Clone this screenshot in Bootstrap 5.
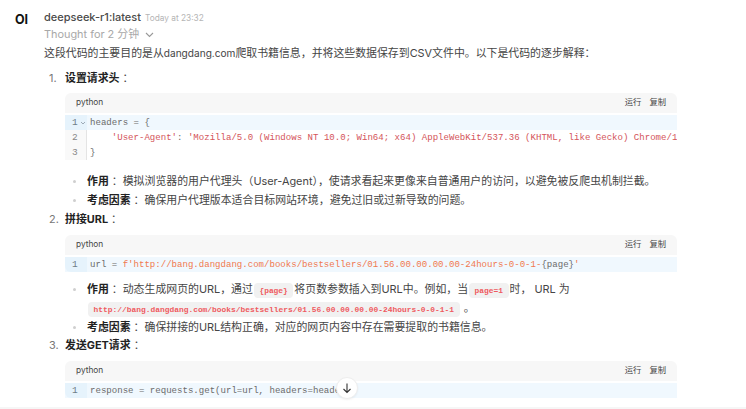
<!doctype html>
<html lang="zh"><head><meta charset="utf-8"><title>chat</title>
<link href="https://cdn.jsdelivr.net/npm/bootstrap@5.3.0/dist/css/bootstrap.min.css" rel="stylesheet">
<style>
html,body{height:409px;overflow:hidden;background:#fff}
body{font-family:Inter,"Noto Sans CJK SC",sans-serif;font-size:10.9px;line-height:19px;color:#454545;position:relative}
.msg-wrap{padding:9px 0 0 15px;gap:8px}
.logo-ol{font-weight:700;font-size:12.5px;color:#111;width:21px;line-height:20px;padding-top:1px;letter-spacing:-.2px}
.body-col{width:633px}
.who{font-weight:500;font-size:11px;color:#4a4a4a;line-height:17px;height:17px}
.when{font-size:8.3px;color:#b5b5b5;font-weight:400;margin-left:4px}
.thought{color:#a8a8a8;line-height:17px;height:18px;font-size:10.9px}
.thought svg{margin-left:6px}
.intro{line-height:19px;margin:0 0 6px}
.narrow-lat{font-size:10.1px}
.steps{list-style:none;margin:0;padding:0}
.step-row{line-height:19px;padding-left:21px;position:relative}
.num{position:absolute;left:5px;top:0;color:#777}
.step-row strong,.subs strong{font-weight:700;color:#222}
.cl{padding-left:3px}
.cblock{margin:5px 0 0 21px;width:612px;overflow:hidden}
.cblock.lower{margin-top:6px}
.chead{height:20px;background:#f7f7f7;border-radius:6px 6px 0 0;padding:0 11px;font-size:8.3px;color:#444;line-height:19px;margin-bottom:2px}
.chead .acts{gap:8px}
.crow{height:15px;line-height:15px;font-family:"Liberation Mono","Noto Sans CJK SC",monospace;font-size:9.07px;color:#6b6b6b;white-space:nowrap;overflow:hidden}
.crow.on{background:#f0f8fe}
.gut{flex:0 0 22px;background:#f9f9f9;border-right:1px solid #e4e4e4;color:#888;padding-left:7px;position:relative;font-size:9.5px}
.crow.on .gut{background:#e6f3fc;border-right-color:#e6f3fc;color:#6f7c88}
.fold{position:absolute;left:15px;top:5px}
.ctext{padding-left:3px;white-space:pre}
.rd{color:#d4545a}.org{color:#f0794f}
.last{border-radius:0 0 0 6px}
.subs{list-style:none;margin:12px 0 0 0;padding:0 0 0 43px}
.subs li{position:relative;line-height:19px}
.subs li::before{content:"";position:absolute;left:-14px;top:8px;width:3px;height:3px;border-radius:50%;background:#cfcfcf}
.subs.tight{margin-top:8px}
.subs.tight li:last-child{line-height:18px}
.icode{font-family:"Liberation Mono",monospace;font-weight:700;font-size:7.92px;line-height:1;color:#ef5a5f;background:#f1f1f1;border-radius:4px;padding:3px 5.5px;margin:0 1px}
.downbtn{position:absolute;left:336px;top:377px;width:22px;height:22px;border-radius:50%;background:#fff;border:1px solid #eee;box-shadow:0 1px 2px rgba(0,0,0,.05)}
.bottom-rule{position:absolute;left:0;right:0;top:407px;height:2px;background:#f6f6f6}
</style></head><body>
<div class="d-flex msg-wrap">
 <div class="logo-ol">OI</div>
 <div class="body-col">
  <div class="who">deepseek-r1:latest<span class="when">Today at 23:32</span></div>
  <div class="thought">Thought for 2 分钟<svg width="9" height="6" viewBox="0 0 9 6"><path d="M1 1l3.500 3.500L8 1" fill="none" stroke="#999" stroke-width="1.1"/></svg></div>
  <p class="intro">这段代码的主要目的是从<span class="narrow-lat">dangdang.com</span>爬取书籍信息，并将这些数据保存到CSV文件中。以下是代码的逐步解释：</p>
  <ol class="steps">
   <li>
    <div class="step-row"><span class="num">1.</span><strong>设置请求头</strong><span class="cl">：</span></div>
    <div class="cblock">
     <div class="chead d-flex justify-content-between"><span>python</span><span class="d-flex acts"><span>运行</span><span>复制</span></span></div>
     <div class="crow on d-flex"><div class="gut">1<svg class="fold" width="6" height="6" viewBox="0 0 6 6"><path d="M1 2l2 2 2-2" fill="none" stroke="#8a97a3" stroke-width=".8"/></svg></div><div class="ctext">headers = {</div></div>
     <div class="crow d-flex"><div class="gut">2</div><div class="ctext">    <span class="rd">'User-Agent'</span>: <span class="rd">'Mozilla/5.0 (Windows NT 10.0; Win64; x64) AppleWebKit/537.36 (KHTML, like Gecko) Chrome/120.0'</span></div></div>
     <div class="crow d-flex"><div class="gut">3</div><div class="ctext">}</div></div>
    </div>
    <ul class="subs">
     <li><strong>作用</strong><span class="cl">：</span>模拟浏览器的用户代理头（User-Agent），使请求看起来更像来自普通用户的访问，以避免被反爬虫机制拦截。</li>
     <li><strong>考虑因素</strong><span class="cl">：</span>确保用户代理版本适合目标网站环境，避免过旧或过新导致的问题。</li>
    </ul>
   </li>
   <li>
    <div class="step-row"><span class="num">2.</span><strong>拼接URL</strong><span class="cl">：</span></div>
    <div class="cblock lower">
     <div class="chead d-flex justify-content-between"><span>python</span><span class="d-flex acts"><span>运行</span><span>复制</span></span></div>
     <div class="crow on d-flex"><div class="gut last">1</div><div class="ctext">url = <span class="org">f'http://bang.dangdang.com/books/bestsellers/01.56.00.00.00.00-24hours-0-0-1-</span>{page}<span class="org">'</span></div></div>
    </div>
    <ul class="subs tight">
     <li><strong>作用</strong><span class="cl">：</span>动态生成网页的URL，通过<code class="icode">{page}</code>将页数参数插入到URL中。例如，当<code class="icode">page=1</code>时， URL 为 <code class="icode">http://bang.dangdang.com/books/bestsellers/01.56.00.00.00.00-24hours-0-0-1-1</code> 。</li>
     <li><strong>考虑因素</strong><span class="cl">：</span>确保拼接的URL结构正确，对应的网页内容中存在需要提取的书籍信息。</li>
    </ul>
   </li>
   <li>
    <div class="step-row"><span class="num">3.</span><strong>发送GET请求</strong><span class="cl">：</span></div>
    <div class="cblock lower">
     <div class="chead d-flex justify-content-between"><span>python</span><span class="d-flex acts"><span>运行</span><span>复制</span></span></div>
     <div class="crow on d-flex"><div class="gut last">1</div><div class="ctext">response = requests.get(url=url, headers=headers)</div></div>
    </div>
   </li>
  </ol>
 </div>
</div>
<div class="downbtn d-flex align-items-center justify-content-center"><svg width="12" height="12" viewBox="0 0 12 12"><path d="M6 1.500v9M2.500 7L6 10.500 9.500 7" fill="none" stroke="#333" stroke-width="1.1"/></svg></div>
<div class="bottom-rule"></div>
<script src="https://cdn.jsdelivr.net/npm/bootstrap@5.3.0/dist/js/bootstrap.bundle.min.js"></script>
</body></html>
